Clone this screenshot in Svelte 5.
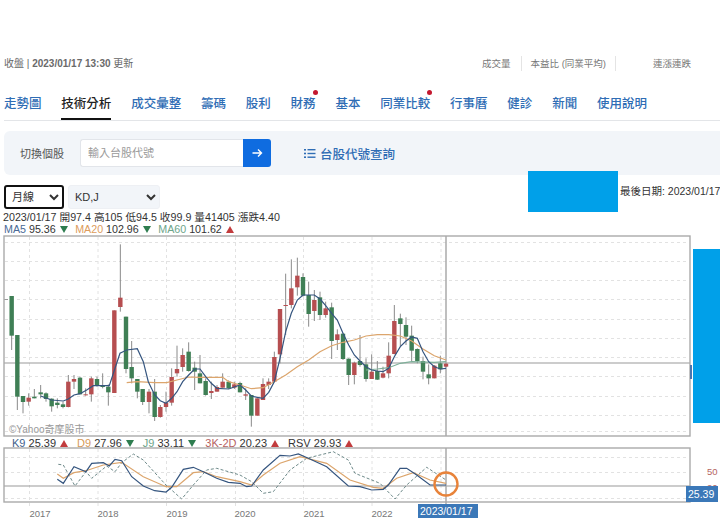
<script>
  const tabs = [
    { label: '走勢圖' },
    { label: '技術分析', active: true },
    { label: '成交彙整' },
    { label: '籌碼' },
    { label: '股利' },
    { label: '財務', dot: true },
    { label: '基本' },
    { label: '同業比較', dot: true },
    { label: '行事曆' },
    { label: '健診' },
    { label: '新聞' },
    { label: '使用說明' }
  ];

  const maLegend = [
    { name: 'MA5', value: '95.36', color: '#4a6a96', up: false },
    { name: 'MA20', value: '102.96', color: '#dd9c5c', up: false },
    { name: 'MA60', value: '101.62', color: '#6ea58a', up: true }
  ];

  const kdLegend = [
    { name: 'K9', value: '25.39', color: '#3f5f8c', up: true },
    { name: 'D9', value: '27.96', color: '#d69a58', up: false },
    { name: 'J9', value: '33.11', color: '#6ea58a', up: false },
    { name: '3K-2D', value: '20.23', color: '#b5615f', up: true },
    { name: 'RSV', value: '29.93', color: '#333', up: true }
  ];

  // x, wick top, wick bottom, body top, body bottom, colour (read off the chart at 3x)
  const left = [
    [35,183,345,183,302,'g'],[52,300,525,300,485,'g'],[69,483,535,483,501,'g'],[86,475,512,488,500,'r'],
    [103,462,490,485,490,'g'],[122,450,490,472,478,'g'],[138,472,500,475,492,'g'],[155,490,530,491,514,'g'],
    [172,490,520,503,510,'g'],[189,500,520,508,516,'g'],[205,420,517,440,516,'r'],[222,420,462,432,440,'r'],
    [240,425,478,428,478,'g'],[257,460,482,478,481,'r'],[274,425,500,430,478,'r'],[291,425,455,432,450,'g'],
    [308,415,460,450,456,'g'],[325,448,512,455,472,'g'],[343,226,474,226,474,'r'],[361,28,230,188,216,'r'],
    [378,245,415,245,402,'g'],[395,318,445,396,430,'g'],[412,432,490,432,470,'g'],[428,462,510,462,501,'g'],
    [447,462,535,470,501,'r'],[464,432,558,470,546,'g'],[481,510,548,516,546,'r'],[498,470,530,503,516,'r'],
    [515,400,512,426,503,'r'],[531,332,425,402,415,'r'],[548,340,410,360,396,'r'],[566,322,410,350,408,'g'],
    [584,380,465,398,410,'g'],[600,360,445,415,445,'g'],[617,430,482,438,480,'g'],[634,440,492,468,474,'r'],
    [651,450,470,456,470,'r'],[668,415,458,440,458,'r'],[686,436,462,440,460,'g'],[703,440,462,448,458,'r']
  ];
  const right = [
    [0,440,472,444,472,'g'],[17,460,495,478,482,'r'],[34,480,575,480,542,'g'],[52,490,542,490,542,'r'],
    [69,430,495,447,495,'r'],[86,430,462,440,450,'r'],[103,350,440,366,440,'r'],[120,222,385,222,358,'r'],
    [137,116,300,210,213,'r'],[154,73,220,160,210,'r'],[172,68,182,122,157,'r'],[189,115,185,126,182,'g'],
    [206,140,275,180,237,'g'],[223,165,258,195,228,'r'],[240,170,255,187,240,'g'],[257,200,248,220,240,'r'],
    [275,203,372,217,318,'g'],[292,283,345,298,315,'r'],[309,295,375,296,372,'g'],[326,370,450,371,420,'g'],
    [343,380,448,383,420,'r'],[360,300,395,378,390,'g'],[378,370,440,388,432,'g'],[395,358,432,410,432,'r'],
    [412,378,435,408,434,'g'],[429,395,430,415,428,'r'],[446,322,430,362,415,'r'],[463,210,358,258,357,'r'],
    [481,236,333,250,267,'g'],[498,247,330,270,305,'g'],[515,272,378,302,347,'g'],[532,340,385,342,378,'g'],
    [549,365,433,378,410,'g'],[566,388,448,418,430,'g'],[583,390,430,392,430,'r'],[601,362,415,385,403,'g'],
    [618,385,396,386,395,'r']
  ];

  const toCandle = (ox) => ([x, wt, wb, bt, bb, c]) => ({
    x: ox + x / 3,
    wt: 235 + wt / 3,
    wb: 235 + wb / 3,
    bt: 235 + bt / 3,
    h: Math.max((bb - bt) / 3, 1),
    c
  });
  const candles = [...left.map(toCandle(0)), ...right.map(toCandle(240))];

  // left part and right part of a line, read at 3x, into one polyline
  function line(a, b, y0) {
    const pts = [];
    for (let i = 0; i < a.length; i += 2) pts.push(`${(a[i] / 3).toFixed(1)},${(y0 + a[i + 1] / 3).toFixed(1)}`);
    for (let i = 0; i < b.length; i += 2) pts.push(`${(240 + b[i] / 3).toFixed(1)},${(y0 + b[i + 1] / 3).toFixed(1)}`);
    return pts.join(' ');
  }

  const ma5 = line(
    [122,483,140,490,155,495,190,498,205,492,222,480,240,476,260,465,280,452,310,452,328,452,345,400,360,355,380,345,412,341,430,380,445,440,464,480,481,497,498,505,515,490,531,470,548,440,566,420,584,402,600,402,617,425,634,445,651,460,686,462],
    [0,450,17,465,34,483,52,487,69,490,86,472,103,440,120,370,137,290,154,235,172,195,189,180,223,180,240,192,257,212,275,235,292,255,309,295,326,330,343,360,360,378,378,395,395,405,412,408,429,410,446,400,463,365,481,335,498,318,515,306,532,310,549,350,566,380,583,395,601,402,618,400],
    235
  );
  const ma20 = line(
    [380,443,412,440,464,443,500,443,531,435,566,426,600,427,668,427,686,440],
    [0,450,34,461,69,458,103,440,137,420,172,395,206,375,240,350,275,332,309,322,343,315,378,303,412,299,446,299,481,303,515,318,549,342,583,362,618,375],
    235
  );
  const ma60 = line([], [378,405,412,402,446,398,481,385,515,380,583,382,618,380], 235);

  const kLine = line(
    [172,148,190,160,222,110,258,125,275,100,310,98,328,108,345,88,365,92,395,140,430,168,464,182,498,186,515,172,550,118,580,112,610,125,650,145,685,157],
    [0,160,20,170,35,168,70,120,120,76,150,78,175,72,205,85,260,110,325,168,360,170,395,180,430,178,445,165,480,115,500,115,530,135,570,165,618,165],
    430
  );
  const dLine = line(
    [172,132,190,145,222,128,258,122,310,105,365,97,430,140,498,170,530,170,580,128,610,125,650,140],
    [0,155,35,165,70,135,120,100,180,80,260,100,330,150,400,172,430,175,470,145,520,128,570,150,618,160],
    430
  );
  const jLine = line(
    [175,103,190,105,225,168,258,125,275,145,320,108,345,125,365,98,400,72,430,90,498,165,545,207,580,165,620,120,650,115],
    [0,135,35,155,70,190,100,185,150,120,200,85,280,65,325,90,345,130,420,160,465,207,500,165,560,112,618,150],
    430
  );

  const mainGrid = [242, 261, 280, 299, 319, 338, 357, 376, 396, 415, 431];
  const kdGrid = [457, 472, 498];
  const vGrid = [29.5, 98, 166.5, 235.5, 303.5, 372, 441];
  const years = [
    { x: 40, t: '2017' }, { x: 108, t: '2018' }, { x: 177, t: '2019' },
    { x: 245, t: '2020' }, { x: 314, t: '2021' }, { x: 382, t: '2022' }
  ];
</script>

<div class="page">
  <div class="status">
    <span class="time">收盤 | <b>2023/01/17 13:30</b> 更新</span>
    <div class="filters">
      <span class="f1">成交量</span>
      <span class="f2">本益比 (同業平均)</span>
      <span class="f3">連漲連跌</span>
    </div>
  </div>

  <nav class="tabs">
    {#each tabs as tab}
      <span class="tab" class:active={tab.active}>
        {tab.label}
        {#if tab.dot}<i class="dot"></i>{/if}
      </span>
    {/each}
  </nav>

  <div class="switcher">
    <span class="sw-label">切換個股</span>
    <div class="search">
      <input placeholder="輸入台股代號" />
      <button aria-label="前往">
        <svg width="12" height="12" viewBox="0 0 12 12" fill="none" stroke="#fff" stroke-width="1.4">
          <path d="M1.5 6h9M7 2.5 10.5 6 7 9.5" />
        </svg>
      </button>
    </div>
    <a class="lookup" href="#lookup">
      <svg width="12" height="11" viewBox="0 0 12 11" fill="#2f6db5">
        <rect x="0" y="1" width="2" height="1.6" /><rect x="3.5" y="1" width="8" height="1.4" />
        <rect x="0" y="4.7" width="2" height="1.6" /><rect x="3.5" y="4.8" width="8" height="1.4" />
        <rect x="0" y="8.4" width="2" height="1.6" /><rect x="3.5" y="8.5" width="8" height="1.4" />
      </svg>
      台股代號查詢
    </a>
  </div>

  <div class="selects">
    <select class="period"><option>月線</option></select>
    <select class="indicator"><option>KD,J</option></select>
  </div>

  <div class="ad ad-top"></div>
  <div class="last-date">最後日期: 2023/01/17</div>

  <div class="info ohlc">2023/01/17 開97.4 高105 低94.5 收99.9 量41405 漲跌4.40</div>
  <div class="info legend ma">
    {#each maLegend as m}
      <span class="item">
        <span style="color: {m.color}">{m.name}</span> {m.value}
        <i class:up={m.up} class:down={!m.up}></i>
      </span>
    {/each}
  </div>

  <svg class="chart main" width="720" height="202" viewBox="0 235 720 202">
    <g stroke="#e2e2e2" stroke-dasharray="3 3" fill="none">
      {#each mainGrid as y}<line x1="5" x2="689" y1={y + 0.5} y2={y + 0.5} />{/each}
      {#each vGrid as x}<line x1={x} x2={x} y1="237" y2="435" />{/each}
    </g>
    <line x1="4" x2="8" y1="299.5" y2="299.5" stroke="#999" />
    <line x1="4" x2="690" y1="363" y2="363" stroke="#999" />
    <line x1="446" x2="446" y1="236" y2="436" stroke="#aaa" stroke-width="1.5" />
    {#each candles as c}
      <line x1={c.x} x2={c.x} y1={c.wt} y2={c.wb} stroke="#8a8a8a" />
      <rect x={c.x - 2.2} y={c.bt} width="4.4" height={c.h} fill={c.c === 'r' ? '#b64e50' : '#3f7f55'} />
    {/each}
    <polyline points={ma60} fill="none" stroke="#7fb09a" stroke-width="1.2" />
    <polyline points={ma20} fill="none" stroke="#dca56c" stroke-width="1.2" />
    <polyline points={ma5} fill="none" stroke="#35557f" stroke-width="1.2" />
    <text x="9" y="433" class="mark">©Yahoo奇摩股市</text>
    <rect x="4" y="236" width="686" height="200" fill="none" stroke="#aaa" stroke-width="1.4" />
    <rect x="690" y="365" width="2" height="14" fill="#4a76b0" />
  </svg>

  <div class="info legend kd">
    {#each kdLegend as k}
      <span class="item">
        <span style="color: {k.color}">{k.name}</span> {k.value}
        <i class:up={k.up} class:down={!k.up}></i>
      </span>
    {/each}
  </div>

  <svg class="chart" width="720" height="72" viewBox="0 447 720 72">
    <g stroke="#e2e2e2" stroke-dasharray="3 3" fill="none">
      {#each kdGrid as y}<line x1="5" x2="689" y1={y + 0.5} y2={y + 0.5} />{/each}
      {#each vGrid as x}<line x1={x} x2={x} y1="449" y2="506" />{/each}
    </g>
    <line x1="4" x2="690" y1="486" y2="486" stroke="#999" />
    <line x1="446" x2="446" y1="448" y2="505" stroke="#aaa" stroke-width="1.5" />
    <polyline points={jLine} fill="none" stroke="#6e8a8a" stroke-dasharray="3 2" />
    <polyline points={dLine} fill="none" stroke="#dca56c" stroke-width="1.2" />
    <polyline points={kLine} fill="none" stroke="#35557f" stroke-width="1.2" />
    <rect x="4" y="448" width="686" height="54" fill="none" stroke="#aaa" stroke-width="1.4" />
    <circle cx="446" cy="484" r="11.5" fill="none" stroke="#e8833a" stroke-width="2.4" />
    <text x="707" y="475" class="axis-red">50</text>
    <text x="707" y="491" class="axis-red">20</text>
    {#each years as y}<text x={y.x} y="517" class="year" text-anchor="middle">{y.t}</text>{/each}
    <rect x="418" y="504" width="60" height="14" fill="#3b78b8" />
    <text x="420" y="515" class="badge">2023/01/17</text>
    <rect x="686" y="486" width="32" height="16" fill="#3b78b8" />
    <text x="688" y="498" class="badge">25.39</text>
  </svg>

  <div class="ad ad-side"></div>
</div>

<style>
  :global(body) {
    margin: 0;
    background: #fff;
    overflow: hidden;
  }
  .page {
    position: relative;
    width: 720px;
    height: 519px;
    overflow: hidden;
    padding-top: 56px;
    box-sizing: border-box;
    font-family: 'Liberation Sans', 'Noto Sans CJK TC', sans-serif;
    color: #333;
  }
  .status {
    display: flex;
    justify-content: space-between;
    height: 15px;
    line-height: 15px;
    padding-left: 4px;
    font-size: 9.5px;
    color: #666;
  }
  .time {
    font-size: 10px;
    white-space: nowrap;
  }
  .time b {
    color: #6a6a6a;
  }
  .filters {
    display: flex;
    color: #777;
  }
  .f1 {
    padding-right: 10px;
    border-right: 1px solid #e4e4e4;
  }
  .f2 {
    margin-left: 9px;
    padding-right: 9px;
    border-right: 1px solid #e4e4e4;
  }
  .f3 {
    margin-left: 37px;
    margin-right: 29px;
  }
  .tabs {
    display: flex;
    gap: 19.8px;
    margin: 17px 0 0 4px;
    height: 32px;
    border-bottom: 1px solid #e3e5e8;
    font-size: 12.5px;
    font-weight: 500;
    line-height: 32px;
    color: #2f6db5;
    white-space: nowrap;
  }
  .tab {
    position: relative;
    height: 32px;
    box-sizing: border-box;
  }
  .tab.active {
    color: #222;
    border-bottom: 2px solid #111;
  }
  .dot {
    position: absolute;
    top: 2px;
    right: -2px;
    width: 5px;
    height: 5px;
    border-radius: 50%;
    background: #c4182f;
  }
  .switcher {
    display: flex;
    align-items: center;
    margin: 10px 0 0 4px;
    height: 44px;
    background: #f2f5f9;
    border-radius: 6px 0 0 6px;
    padding-left: 16px;
  }
  .sw-label {
    width: 60px;
    font-size: 11px;
    color: #555;
  }
  .search {
    display: flex;
    width: 191px;
    height: 28px;
  }
  .search input {
    width: 163px;
    box-sizing: border-box;
    border: 1px solid #e2e5ea;
    border-right: 0;
    border-radius: 3px 0 0 3px;
    padding: 0 7px;
    font: 11px 'Liberation Sans', 'Noto Sans CJK TC', sans-serif;
    background: #fff;
  }
  .search input::placeholder {
    color: #9a9a9a;
  }
  .search button {
    width: 28px;
    border: 0;
    padding: 0;
    border-radius: 0 3px 3px 0;
    background: #0f6ce0;
    display: flex;
    align-items: center;
    justify-content: center;
  }
  .lookup {
    display: flex;
    align-items: center;
    gap: 4px;
    margin-left: 33px;
    font-size: 12.5px;
    font-weight: 500;
    color: #2f6db5;
    text-decoration: none;
  }
  .selects {
    display: flex;
    gap: 4px;
    margin: 10px 0 0 4px;
    height: 24px;
  }
  select {
    height: 24px;
    font: 11px 'Liberation Sans', 'Noto Sans CJK TC', sans-serif;
    color: #333;
    border-radius: 3px;
  }
  .period {
    width: 60px;
    background: #fff;
    border: 2px solid #111;
    padding-left: 2px;
  }
  .indicator {
    width: 92px;
    background: #f2f5f9;
    border: 1px solid #eef0f4;
    padding-left: 2px;
  }
  .ad {
    position: absolute;
    background: #00a0e9;
  }
  .ad-top {
    left: 528px;
    top: 171px;
    width: 90px;
    height: 41px;
  }
  .ad-side {
    left: 693px;
    top: 249px;
    width: 27px;
    height: 174px;
  }
  .last-date {
    position: absolute;
    left: 620px;
    top: 185px;
    font-size: 10.5px;
    line-height: 13px;
    white-space: nowrap;
  }
  .info {
    margin: 2px 0 0 3px;
    height: 12px;
    line-height: 12px;
    font-size: 11px;
    white-space: nowrap;
  }
  .ohlc {
    font-size: 10.7px;
  }
  .legend {
    display: flex;
    gap: 8px;
    margin: 0 0 0 4px;
  }
  .ma {
    font-size: 10.7px;
    gap: 7.5px;
  }
  .legend i {
    display: inline-block;
    width: 0;
    height: 0;
    margin-left: 1px;
    border-left: 4px solid transparent;
    border-right: 4px solid transparent;
  }
  .up {
    border-bottom: 7px solid #c23b3d;
  }
  .down {
    border-top: 7px solid #2e7d4f;
  }
  .chart {
    display: block;
  }
  .kd {
    margin: 0 0 0 12px;
    height: 10px;
    line-height: 12px;
    gap: 9px;
  }
  .mark {
    font-size: 10px;
    fill: #9a9a9a;
  }
  .year {
    font-size: 9.5px;
    fill: #777;
  }
  .axis-red {
    font-size: 9.5px;
    fill: #b5645f;
  }
  .badge {
    font-size: 10.5px;
    fill: #fff;
  }
</style>
